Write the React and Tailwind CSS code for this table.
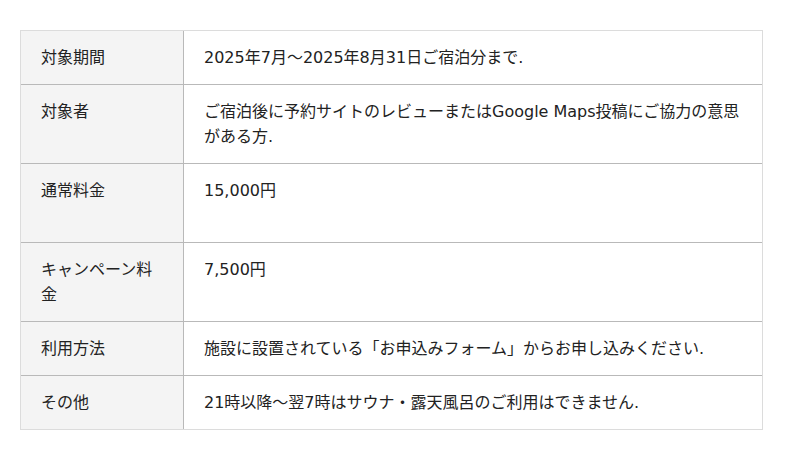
export default function App() {
  const rows = [
    ["対象期間", "2025年7月～2025年8月31日ご宿泊分まで."],
    ["対象者", "ご宿泊後に予約サイトのレビューまたはGoogle Maps投稿にご協力の意思がある方."],
    ["通常料金", "15,000円", true],
    ["キャンペーン料金", "7,500円"],
    ["利用方法", "施設に設置されている「お申込みフォーム」からお申し込みください."],
    ["その他", "21時以降～翌7時はサウナ・露天風呂のご利用はできません."],
  ];
  return (
    <div
      className="w-[800px] h-[460px] bg-white pt-[30px] pl-[20px] text-[16px] leading-[25px] text-[#222]"
      style={{ fontFamily: '"DejaVu Sans", "Noto Sans CJK JP", sans-serif' }}
    >
      <div className="w-[743px] border border-[#dcdcdc]">
        {rows.map(([k, v, extra], i) => (
          <div key={i} className={`flex ${i > 0 ? "border-t border-[#b9b9b9]" : ""}`}>
            <div className="w-[163px] shrink-0 bg-[#f4f4f4] border-r border-[#b9b9b9] px-[20px] py-[14px]">
              {k}
            </div>
            <div className="flex-1 pl-[20px] pr-[16px] py-[14px]">
              {v}
              {extra ? <br /> : null}
              {extra ? "\u00a0" : null}
            </div>
          </div>
        ))}
      </div>
    </div>
  );
}
